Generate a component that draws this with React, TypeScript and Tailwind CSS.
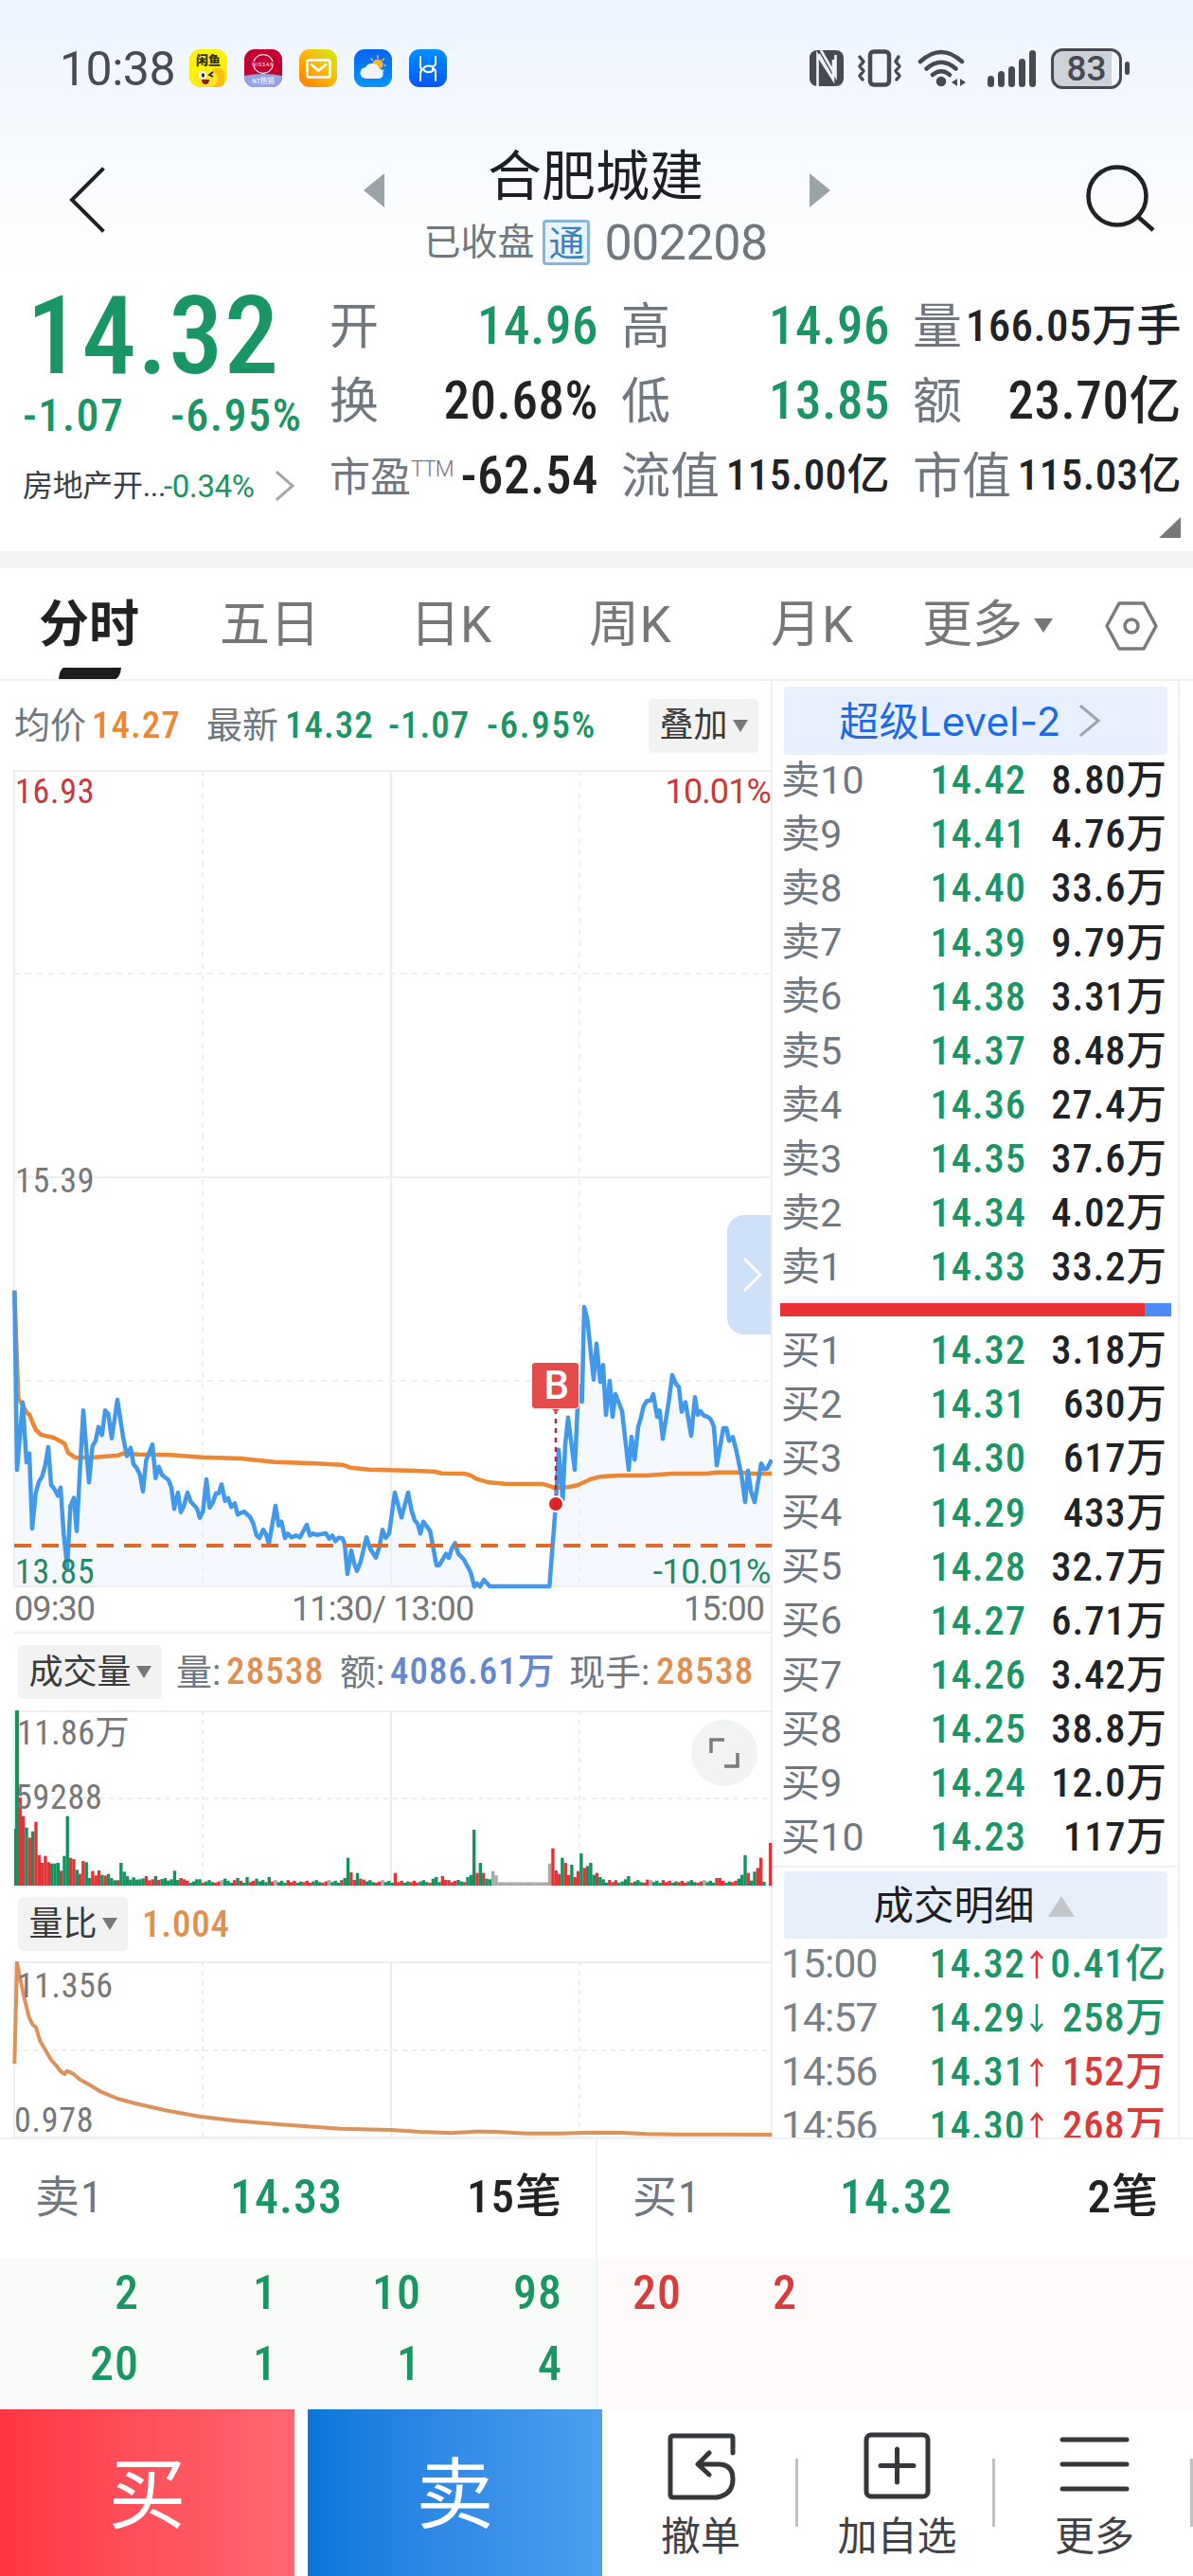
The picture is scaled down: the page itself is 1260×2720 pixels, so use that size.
import type { ReactNode } from "react";

const GREEN = "#1a9566";
const RED = "#e03438";

type Pt = [number, number];

const toPath = (pts: Pt[]) => "M" + pts.map((p) => `${p[0].toFixed(1)} ${p[1].toFixed(1)}`).join("L");

/* ---------- intraday price data (thirds of a pixel, per session) ---------- */

const morning: Pt[] = [
  [46, 188], [54, 756], [72, 542], [84, 732], [93, 704], [102, 942], [113, 830], [123, 794], [133, 778], [143, 742], [153, 684],
  [162, 804], [172, 816], [183, 838], [192, 812], [202, 960], [213, 1066], [223, 872], [234, 845], [243, 950], [254, 740],
  [264, 568], [282, 796], [293, 680], [303, 664], [312, 620], [323, 646], [333, 568], [343, 578], [354, 656], [372, 534],
  [390, 652], [402, 712], [414, 686], [423, 738], [433, 750], [443, 770], [453, 824], [463, 726], [483, 676], [493, 782],
  [503, 746], [513, 772], [534, 788], [543, 812], [552, 880], [564, 828], [573, 890], [582, 872], [594, 828], [604, 856],
  [624, 878], [633, 908], [643, 888], [654, 786], [664, 876], [674, 860], [684, 830], [693, 830], [702, 802], [713, 854],
  [723, 846], [733, 874], [744, 862], [753, 898], [773, 888], [793, 906], [803, 928], [813, 964], [822, 972], [834, 946],
  [843, 960], [852, 990], [873, 870], [883, 932], [892, 920], [903, 972], [912, 958], [923, 970], [938, 964], [950, 970],
  [972, 930], [982, 964], [992, 958], [1003, 962], [1033, 957], [1043, 974], [1053, 964], [1063, 982], [1073, 971], [1085, 973],
  [1092, 990], [1101, 1086], [1113, 1012], [1122, 1052], [1131, 1076], [1143, 1046], [1161, 970], [1173, 1006], [1191, 1034], [1202, 1000],
  [1212, 946], [1222, 971], [1233, 958], [1251, 828], [1272, 907], [1293, 828], [1304, 886], [1314, 916], [1323, 926], [1332, 958], [1341, 920],
];

const afternoon: Pt[] = [
  [141, 1070], [163, 1100], [183, 1208], [192, 1208], [213, 1172], [222, 1185], [231, 1156], [242, 1138], [252, 1172], [270, 1190],
  [291, 1230], [303, 1276], [312, 1266], [321, 1276], [333, 1254], [352, 1275], [541, 1275], [561, 1014], [570, 842], [583, 1002],
  [591, 826], [600, 740], [621, 906], [633, 640], [644, 690], [651, 390], [661, 428], [681, 620], [690, 506], [702, 628], [711, 574],
  [720, 732], [732, 624], [741, 738], [750, 666], [771, 720], [792, 906], [801, 802], [811, 874], [822, 770], [831, 740], [839, 704],
  [850, 688], [862, 686], [870, 666], [882, 738], [890, 718], [900, 808], [919, 690], [930, 606], [942, 634], [951, 644], [960, 722],
  [972, 692], [990, 798], [1002, 676], [1011, 732], [1020, 720], [1030, 734], [1042, 738], [1052, 746], [1062, 770], [1071, 892],
  [1092, 774], [1102, 774], [1110, 814], [1122, 802], [1132, 840], [1150, 926], [1161, 1008], [1170, 908], [1180, 976], [1191, 1008],
  [1212, 886], [1221, 904], [1230, 902], [1245, 874],
];

const avgMorning: Pt[] = [
  [46, 188], [58, 530], [70, 548], [84, 574], [94, 582], [104, 608], [114, 630], [130, 645], [170, 654], [204, 672], [216, 702],
  [240, 718], [300, 716], [375, 710], [390, 704], [440, 707], [540, 709], [640, 716], [760, 720], [870, 731], [1000, 736],
  [1085, 740], [1110, 749], [1170, 755], [1240, 757],
];
const avgAfternoon: Pt[] = [
  [0, 906], [120, 909], [180, 912], [200, 917], [270, 918], [290, 923], [310, 935], [350, 946], [400, 950], [520, 951], [545, 958],
  [556, 964], [600, 961], [630, 955], [670, 936], [700, 928], [760, 924], [850, 924], [930, 918], [1040, 918], [1070, 914], [1150, 914], [1180, 918], [1245, 918],
];

const am = (p: Pt): Pt => [p[0] / 3, 1300 + p[1] / 3];
const pm = (p: Pt): Pt => [400 + p[0] / 3, 1250 + p[1] / 3];

const priceLine = toPath([...morning.map(am), ...afternoon.map(pm)]);
const avgLine = toPath([...avgMorning.map(am), ...avgAfternoon.map(pm)]);

/* ---------- volume bars: minute index -> [height, colour] ---------- */

const G = "#17925f";
const R = "#e03438";
const Y = "#a8a8a8";

const spikes: [number, number, string][] = [
  [34, 256, G], [40, 533, R], [46, 592, R], [53, 628, G], [59, 660, R], [65, 640, G], [71, 610, R], [78, 715, R], [84, 740, R],
  [90, 718, R], [96, 738, R], [102, 742, G], [109, 742, G], [115, 740, G], [122, 765, R], [128, 718, G], [134, 592, G],
  [140, 724, R], [147, 728, R], [153, 762, G], [159, 775, R], [166, 734, R], [172, 738, G], [178, 788, G], [185, 766, R],
  [191, 780, R], [197, 764, R], [203, 778, G], [210, 780, R], [216, 775, G], [222, 788, G], [228, 795, G], [235, 795, R],
  [241, 740, G], [248, 768, G], [254, 782, G], [260, 793, G], [266, 786, G], [272, 793, G], [278, 792, G], [285, 789, G],
  [291, 782, R], [298, 795, R], [304, 792, R], [310, 782, G], [316, 794, R], [323, 791, G], [329, 788, G], [335, 796, G],
  [341, 792, G], [347, 765, G], [354, 794, G], [360, 788, R], [366, 792, R], [392, 792, G], [398, 792, G], [449, 790, G],
  [474, 788, G], [493, 785, G], [511, 790, G], [536, 785, G], [687, 788, G], [693, 724, G], [700, 770, R], [706, 794, R],
  [712, 772, G], [718, 790, R], [725, 793, R], [788, 772, R], [863, 790, G], [870, 785, G], [882, 782, R], [888, 794, R],
  [914, 794, G], [932, 785, G], [939, 778, G], [946, 635, G], [952, 772, R], [958, 740, G], [965, 772, R], [971, 790, G],
  [977, 792, G], [984, 766, Y], [990, 780, Y], [1096, 742, Y], [1102, 694, R], [1109, 764, R], [1115, 775, R], [1121, 724, G],
  [1128, 740, R], [1134, 778, R], [1140, 746, G], [1146, 785, R], [1152, 766, R], [1159, 710, G], [1165, 756, R], [1171, 750, G],
  [1178, 740, G], [1184, 778, G], [1190, 772, R], [1196, 785, G], [1203, 792, G], [1215, 794, R], [1228, 795, R], [1247, 792, G],
  [1254, 782, G], [1291, 793, R], [1430, 788, R], [1437, 788, R], [1474, 790, G], [1480, 778, G], [1486, 716, G], [1492, 772, R],
  [1499, 796, G], [1505, 768, G], [1511, 756, R], [1518, 724, R], [1524, 800, G], [1530, 812, G], [1537, 677, R],
];

const bars = (() => {
  const table = new Map<number, [number, string]>();
  for (const [x, top, c] of spikes) table.set(Math.round((x - 34) / 6.29), [(812 - top) / 3, c]);
  return Array.from({ length: 240 }, (_, i) => {
    const known = table.get(i);
    const x = 18 + i * 3.329;
    if (known) return { x, h: known[0], c: known[1] };
    if (i > 152 && i < 169) return { x, h: 3.5, c: Y };
    const n = (i * 7919) % 17;
    return { x, h: 3 + (n % 5) * 0.7, c: n < 8 ? G : n === 9 ? Y : R };
  });
})();

const ratioLine = toPath(
  (
    [
      [29, 567], [34, 248], [42, 310], [50, 370], [58, 420], [65, 443], [72, 452], [80, 495], [90, 522], [102, 555], [112, 573],
      [122, 593], [129, 600], [134, 590], [145, 598], [160, 618], [180, 635], [200, 655], [235, 678], [270, 693], [330, 715],
      [400, 735], [470, 748], [560, 760], [680, 773], [780, 777], [840, 783], [900, 787], [950, 782], [990, 783], [1050, 788],
      [1120, 788], [1180, 785], [1240, 786], [1290, 790], [1350, 791], [1540, 792],
    ] as Pt[]
  ).map((p): Pt => [p[0] * 0.5293, 1990 + p[1] / 3]),
);

/* ---------- order book ---------- */

const asks: [string, string, string][] = [
  ["卖10", "14.42", "8.80万"], ["卖9", "14.41", "4.76万"], ["卖8", "14.40", "33.6万"], ["卖7", "14.39", "9.79万"],
  ["卖6", "14.38", "3.31万"], ["卖5", "14.37", "8.48万"], ["卖4", "14.36", "27.4万"], ["卖3", "14.35", "37.6万"],
  ["卖2", "14.34", "4.02万"], ["卖1", "14.33", "33.2万"],
];
const bids: [string, string, string][] = [
  ["买1", "14.32", "3.18万"], ["买2", "14.31", "630万"], ["买3", "14.30", "617万"], ["买4", "14.29", "433万"],
  ["买5", "14.28", "32.7万"], ["买6", "14.27", "6.71万"], ["买7", "14.26", "3.42万"], ["买8", "14.25", "38.8万"],
  ["买9", "14.24", "12.0万"], ["买10", "14.23", "117万"],
];
const trades: [string, string, boolean, string, boolean][] = [
  ["15:00", "14.32", true, "0.41亿", false],
  ["14:57", "14.29", false, "258万", false],
  ["14:56", "14.31", true, "152万", true],
  ["14:56", "14.30", true, "268万", true],
];

/* ---------- pieces ---------- */

function Chevron({ w, h, color, sw, left }: { w: number; h: number; color: string; sw: number; left?: boolean }) {
  const d = left ? `M${w - sw} ${sw}L${sw} ${h / 2}L${w - sw} ${h - sw}` : `M${sw} ${sw}L${w - sw} ${h / 2}L${sw} ${h - sw}`;
  return (
    <svg width={w} height={h} fill="none" stroke={color} strokeWidth={sw} strokeLinecap="square" className="shrink-0">
      <path d={d} />
    </svg>
  );
}

function Caret() {
  return (
    <svg width="16" height="13" className="shrink-0">
      <path d="M0 0H16L8 13Z" fill="#777" />
    </svg>
  );
}

function StatusBar() {
  return (
    <div className="flex h-[144px] items-center pr-[67px] pl-[63px] text-[#484b50]">
      <span className="w-[137px] pt-[2px] text-[50px] tracking-[-0.01em] [font-stretch:100%]">10:38</span>
      <div className="flex gap-[18px]">
        <div className="relative flex h-10 w-10 justify-center overflow-hidden rounded-[11px] bg-[#fbf20a]">
          <span className="pt-[5px] text-[13px] leading-[13px] font-black text-[#33300a]">闲鱼</span>
          <svg viewBox="0 0 40 22" className="absolute bottom-0 left-0 w-10">
            <path d="M24 4Q32 -2 37 6L37 22H10Z" fill="#fbbf10" />
            <ellipse cx="18" cy="13" rx="12" ry="10" fill="#fde32a" />
            <circle cx="14" cy="9" r="4" fill="#fff" />
            <ellipse cx="14.500" cy="9.500" rx="1.600" ry="2.300" fill="#222" />
            <path d="M25 6l-4 3l4 2" stroke="#222" strokeWidth="1.800" fill="none" />
            <path d="M13 14h8q0 5-4 5t-4-5" fill="#8a1f13" />
          </svg>
        </div>
        <svg viewBox="0 0 40 40" className="h-10 w-10 rounded-[11px]">
          <rect width="40" height="40" fill="#c3002f" />
          <path d="M0 28Q20 24 40 28V40H0Z" fill="#93a5e6" />
          <path d="M10 13a10.500 10.500 0 0 1 20 0M10 18a10.500 10.500 0 0 0 20 0" fill="none" stroke="#fff" strokeWidth="1.200" />
          <text x="20" y="17.800" fontSize="6" letterSpacing="0.800" textAnchor="middle" fill="#fff">NISSAN</text>
          <text x="20" y="36" fontSize="7.500" textAnchor="middle" fill="#fff">N7热销</text>
        </svg>
        <div className="flex h-10 w-10 items-center justify-center rounded-[11px] bg-linear-to-tr from-[#ff7a00] via-[#fbb30a] to-[#c5f01a]">
          <svg width="27" height="21" fill="none" stroke="#fff" strokeWidth="2.600" strokeLinejoin="round">
            <rect x="1.500" y="1.500" width="24" height="18" rx="2" />
            <path d="M5 5.500L13.500 12.500L22 5.500" />
          </svg>
        </div>
        <svg viewBox="0 0 40 40" className="h-10 w-10 rounded-[11px] bg-linear-to-b from-[#0a63f0] to-[#0a94ff]">
          <g stroke="#ffc63a" strokeWidth="1.500" strokeLinecap="round">
            <path d="M25 7v2M31.500 10l-1.300 1.500M18 10l1.300 1.500M33 17h-1M31 23l-1-1" />
          </g>
          <circle cx="25" cy="16" r="5.500" fill="#f9b428" />
          <path d="M13 31a6 6 0 0 1-1-12a8 8 0 0 1 14.500 1.500a5.400 5.400 0 0 1 0 10.500Z" fill="#eef5ff" />
        </svg>
        <svg viewBox="0 0 40 40" className="h-10 w-10 rounded-[11px] bg-linear-to-b from-[#088fff] to-[#0a55f5]" fill="none" stroke="#fff" strokeWidth="2" strokeLinecap="round">
          <path d="M12 8V18Q12 21 15 21M28 8V15Q28 18 24 18Q17 16 15 21Q18 26 25 23V19M28 33V24Q28 21 25 20M12 33V26Q12 22 15 21" />
        </svg>
      </div>
      <div className="ml-auto flex items-center text-[#474a50]">
        <svg width="36" height="38" className="mr-[14px]">
          <rect width="36" height="38" rx="8" fill="currentColor" />
          <path d="M8.500 38V5L25 31V10M12 0L27.500 27V5" fill="none" stroke="#eef4fd" strokeWidth="2.600" />
          <path d="M10 4l15 26" stroke="#eef4fd" strokeWidth="2" />
        </svg>
        <svg width="50" height="40" className="mr-[14px]" fill="none" stroke="currentColor" strokeLinecap="round" strokeLinejoin="round">
          <rect x="14" y="2.500" width="20" height="35" rx="4" strokeWidth="4.500" />
          <path d="M3 8l4 5l-4 5l4 5l-4 5l3 4M44 8l-3 5l4 5l-4 5l4 5l-3 4" strokeWidth="3.500" />
        </svg>
        <svg width="52" height="40" className="mr-[22px]" fill="none" stroke="currentColor" strokeWidth="4.500" strokeLinecap="round">
          <path d="M3 13Q25 -7 47 13M9.500 20.500Q25 7 40.500 20.500M16 27Q25 19.500 34 27" />
          <circle cx="25" cy="34" r="3" fill="currentColor" />
          <path d="M42 31v8l-6-4zM45 31v8l6-4z" fill="currentColor" stroke="none" />
        </svg>
        <div className="mr-[16px] flex h-10 items-end gap-[4px]">
          <i className="h-[12px] w-[7px] rounded-full bg-current" />
          <i className="h-[17px] w-[7px] rounded-full bg-current" />
          <i className="h-[22px] w-[7px] rounded-full bg-current" />
          <i className="h-[30px] w-[7px] rounded-full bg-current" />
          <i className="h-[39px] w-[7px] rounded-full bg-current" />
        </div>
        <div className="mr-[3px] flex h-[43px] w-[75px] items-center justify-center rounded-[12px] border-[3px] border-current bg-linear-to-r from-[#cdd1d8] from-88% to-transparent to-88% text-[37px] font-medium">
          <span className="[font-stretch:100%]">83</span>
        </div>
        <i className="h-[14px] w-[5px] rounded-full bg-current" />
      </div>
    </div>
  );
}

function Header() {
  return (
    <div className="flex h-[146px] pl-[72px]">
      <div className="mt-[31px] w-[312px]">
        <Chevron w={40} h={72} color="#202020" sw={4} left />
      </div>
      <svg width="22" height="36" className="mt-[39px]">
        <path d="M22 0V36L0 18Z" fill="#9aa3a8" />
      </svg>
      <div className="flex w-[449px] flex-col items-center">
        <div className="mt-[12px] pr-[3px] text-[57px] leading-[62px] text-[#1d1f22]">合肥城建</div>
        <div className="mt-[11px] flex items-center pr-[3px] whitespace-nowrap text-[#70777d]">
          <span className="text-[39px]">已收盘</span>
          <span className="mr-[15px] ml-[9px] flex h-[48px] w-[50px] items-center justify-center rounded-[4px] border-[3px] border-[#86b4dc] bg-[#eaf4ff] pt-[2px] text-[38px] text-[#3b81bd]">
            通
          </span>
          <span className="pt-[2px] text-[52px] tracking-[-0.01em] [font-stretch:100%]">002208</span>
        </div>
      </div>
      <svg width="22" height="36" className="mt-[39px]">
        <path d="M0 0V36L22 18Z" fill="#9aa3a8" />
      </svg>
      <svg width="76" height="74" className="mt-[29px] ml-[269px]" fill="none" stroke="#202225" strokeWidth="4.500">
        <circle cx="34" cy="34" r="30.500" />
        <path d="M56 56L72 70" />
      </svg>
    </div>
  );
}

function Stat({ label, children, color = "text-[#202224]", size = "text-[55px]" }: { label: ReactNode; children: string; color?: string; size?: string }) {
  return (
    <div className="flex h-[79px] items-center justify-between whitespace-nowrap">
      <span className="pt-[4px] text-[52px] text-[#70777f]">{label}</span>
      <span className={`font-medium tracking-[0.01em] ${size} ${color}`}>{children}</span>
    </div>
  );
}

function Quote() {
  return (
    <div className="relative flex h-[292px]">
      <div className="flex w-[348px] flex-col whitespace-nowrap text-[#1a9566]">
        <div className="mt-[7px] pl-[28px] text-[115px] leading-[115px] font-medium tracking-[0.009em]">14.32</div>
        <div className="flex h-[54px] pl-[24px] text-[48px] leading-[54px] font-medium tracking-[0.03em]">
          <span className="w-[156px]">-1.07</span>
          <span>-6.95%</span>
        </div>
        <div className="mt-[25px] flex h-[44px] items-center pl-[24px] text-[32px] text-[#3b3f45]">
          <span className="w-[149px] tracking-[-0.01em]">房地产开...</span>
          <span className="mr-[17px] w-[100px] text-[33px] tracking-[-0.01em] text-[#1a9566] [font-stretch:100%]">-0.34%</span>
          <Chevron w={22} h={34} color="#a5a8ab" sw={3} />
        </div>
      </div>
      <div className="mt-[14px] grid grid-cols-[284px_284px_284px] gap-x-[24px] [&_span]:leading-[60px]">
        <div>
          <Stat label="开" color="text-[#1a9566]">14.96</Stat>
          <Stat label="换">20.68%</Stat>
          <Stat
            label={
              <b className="flex items-start text-[43px] font-normal">
                市盈
                <small className="mt-[10px] text-[23px] leading-none font-light [font-stretch:100%] tracking-[-0.04em]">TTM</small>
              </b>
            }
          >
            -62.54
          </Stat>
        </div>
        <div>
          <Stat label="高" color="text-[#1a9566]">14.96</Stat>
          <Stat label="低" color="text-[#1a9566]">13.85</Stat>
          <Stat label="流值" size="text-[45px]">115.00亿</Stat>
        </div>
        <div>
          <Stat label="量" size="text-[47px]">166.05万手</Stat>
          <Stat label="额">23.70亿</Stat>
          <Stat label="市值" size="text-[45px]">115.03亿</Stat>
        </div>
      </div>
      <svg width="23" height="22" className="absolute right-[13px] bottom-[14px]">
        <path d="M23 0V22H0Z" fill="#777" />
      </svg>
    </div>
  );
}

function Tabs() {
  return (
    <div className="relative flex h-[119px] items-center border-b-2 border-[#eef0f0] pt-[4px] text-[53px] text-[#777] [&>span]:shrink-0">
      <strong className="w-[190px] pl-[41px] font-bold text-[#202224]">分时</strong>
      <span className="w-[203px] pl-[42px]">五日</span>
      <span className="w-[190px] pl-[40px] [font-stretch:100%]">日K</span>
      <span className="w-[191px] pl-[39px] tracking-[0.01em] [font-stretch:100%]">周K</span>
      <span className="w-[200px] pl-[40px] tracking-[0.02em] [font-stretch:100%]">月K</span>
      <span className="w-[118px]">更多</span>
      <svg width="20" height="15">
        <path d="M0 0H20L10 15Z" fill="#777" />
      </svg>
      <svg width="58" height="56" className="ml-[54px]" fill="none" stroke="#7b7b7b" strokeWidth="3.500" strokeLinejoin="round">
        <path d="M16 4H42L55 28L42 52H16L3 28Z" />
        <circle cx="29" cy="28" r="7" />
      </svg>
      <svg width="66" height="12" className="absolute bottom-0 left-[62px]">
        <path d="M5 0H66Q65 10 60 12H0Q1 2 5 0Z" fill="#1c1c1c" />
      </svg>
    </div>
  );
}

const Pill = ({ children, w }: { children: string; w: string }) => (
  <span className={`flex h-[57px] items-center justify-center gap-[5px] rounded-[5px] bg-[#f2f2f2] text-[36px] font-normal tracking-normal text-[#3a3a3a] ${w}`}>
    {children}
    <Caret />
  </span>
);

function MainChart() {
  return (
    <div className="relative h-[912px] text-[36px] tracking-[0.02em]">
      <svg viewBox="0 813 816 912" className="h-[912px] w-[816px]" fill="none">
        <path d={`${priceLine}V1675H15Z`} fill="#f5f9ff" />
        <g stroke="#eef0f0" strokeWidth="2.500">
          <path d="M15 814H816M15 813V1675M15 1243H816M413 813V1675M15 1675H816M15 1724H816" />
          <path d="M214 813V1675M612 813V1675M15 1028H816M15 1458H816" strokeWidth="2" strokeDasharray="6 6" />
        </g>
        <path d={avgLine} stroke="#ee8733" strokeWidth="4.500" strokeLinejoin="round" />
        <path d={priceLine} stroke="#4299ea" strokeWidth="4.500" strokeLinejoin="round" />
        <path d="M15 1632H815" stroke="#e06a28" strokeWidth="4" strokeDasharray="18 11" />
        <path d="M587 1488V1582" stroke="#a82837" strokeWidth="2.500" strokeDasharray="5 5" />
        <circle cx="587" cy="1588" r="8" fill="#dc2226" stroke="#fff" strokeWidth="2" />
        <path d="M582 1487L587 1492L592 1487Z" fill="#e44c4c" />
      </svg>
      <div className="absolute top-[625px] left-[561px] flex h-[50px] w-[51px] items-center justify-center rounded-[4px] border border-white bg-[#e44c4c] pl-[3px] text-[42px] font-medium text-white [font-stretch:100%]">
        B
      </div>
      <div className="absolute top-[470px] right-0 flex h-[126px] w-[46px] items-center justify-end rounded-l-[18px] bg-[#cfe0f9] pr-[8px]">
        <Chevron w={22} h={38} color="#fff" sw={3} />
      </div>
      <span className="absolute top-[5px] left-[16px] text-[#c8383c]">16.93</span>
      <span className="absolute top-[5px] right-0 tracking-[-0.025em] text-[#c8383c] [font-stretch:100%]">10.01%</span>
      <span className="absolute top-[416px] left-[16px] text-[#777]">15.39</span>
      <span className="absolute top-[829px] left-[16px] text-[#1f8a63]">13.85</span>
      <span className="absolute top-[829px] right-0 tracking-[-0.01em] text-[#1f8a63] [font-stretch:100%]">-10.01%</span>
      <div className="absolute top-[868px] left-[15px] flex tracking-[-0.025em] text-[#777] [&>span]:[font-stretch:100%]">
        <span className="w-[293px]">09:30</span>
        <span className="w-[414px]">11:30/ 13:00</span>
        <span>15:00</span>
      </div>
    </div>
  );
}

function LeftPane() {
  return (
    <div className="flex w-[816px] shrink-0 flex-col border-r-2 border-[#edf0f0] whitespace-nowrap">
      <div className="flex h-[94px] items-center pl-[15px] text-[39px] font-medium tracking-[0.025em] text-[#1a9566]">
        <span className="w-[82px] text-[38px] font-normal tracking-normal text-[#70777f]">均价</span>
        <span className="w-[121px] text-[#ee8733]">14.27</span>
        <span className="w-[83px] text-[38px] font-normal tracking-normal text-[#70777f]">最新</span>
        <span className="w-[109px]">14.32</span>
        <span className="w-[104px]">-1.07</span>
        <span className="w-[171px] tracking-[0.042em]">-6.95%</span>
        <Pill w="w-[116px]">叠加</Pill>
      </div>
      <MainChart />
      <div className="flex h-[81px] items-center pl-[19px] text-[39px] font-medium tracking-[0.03em] text-[#df8f50]">
        <Pill w="w-[152px]">成交量</Pill>
        <span className="ml-[15px] w-[53px] text-[38px] font-normal tracking-normal text-[#70777f]">量:</span>
        <span className="w-[120px]">28538</span>
        <span className="w-[53px] text-[38px] font-normal tracking-normal text-[#70777f]">额:</span>
        <span className="w-[189px] tracking-[0.025em] text-[#6488cd]">4086.61万</span>
        <span className="w-[92px] text-[38px] font-normal tracking-normal text-[#70777f]">现手:</span>
        <span>28538</span>
      </div>
      <div className="relative h-[186px] text-[36px] text-[#777]">
        <svg viewBox="0 1806 816 186" className="h-[186px] w-[816px]">
          <g stroke="#eceeee" strokeWidth="2">
            <path d="M15 1807H816M15 1806V1990M413 1806V1990M15 1990H816" />
            <path d="M214 1806V1990M612 1806V1990M15 1899H816" strokeDasharray="5 5" />
          </g>
          {bars.map((b, i) => (
            <rect key={i} x={b.x - (i ? 1.7 : 2)} y={1991 - b.h} width={i ? 3.4 : 4} height={b.h} fill={b.c} />
          ))}
          <rect x="15" y="1931" width="2" height="60" fill={G} />
        </svg>
        <span className="absolute top-[6px] left-[18px] tracking-[0.01em]">11.86万</span>
        <span className="absolute top-[74px] left-[16px] tracking-[0.02em]">59288</span>
        <div className="absolute top-[10px] right-[14px] flex h-[70px] w-[70px] items-center justify-center rounded-full bg-[#f2f3f3]">
          <svg width="32" height="32" fill="none" stroke="#7b7b7b" strokeWidth="3.500">
            <path d="M2 16V2H16M30 16V30H16" />
          </svg>
        </div>
      </div>
      <div className="flex h-[79px] items-center pl-[19px] text-[39px] font-medium tracking-[0.02em] text-[#df8f50]">
        <Pill w="w-[116px]">量比</Pill>
        <span className="ml-[15px] pt-[2px]">1.004</span>
      </div>
      <div className="relative h-[186px] text-[36px] text-[#777]">
        <svg viewBox="0 2071 816 186" className="h-[186px] w-[816px]" fill="none">
          <g stroke="#eceeee" strokeWidth="2">
            <path d="M15 2072H816M15 2071V2257M413 2071V2257M15 2257H816" />
            <path d="M214 2071V2257M612 2071V2257M15 2165H816" strokeDasharray="5 5" />
          </g>
          <path d={ratioLine} stroke="#dc9259" strokeWidth="4" strokeLinejoin="round" />
        </svg>
        <span className="absolute top-[8px] left-[18px] tracking-[0.015em]">11.356</span>
        <span className="absolute top-[150px] left-[15px] tracking-[0.02em]">0.978</span>
      </div>
    </div>
  );
}

function BookRow({ row }: { row: [string, string, string] }) {
  return (
    <div className="flex h-[57.100px] items-center pl-[9px] text-[42.500px] tracking-[0.022em] whitespace-nowrap">
      <span className="w-[130px] text-[41px] tracking-[0.005em] text-[#70777f] [font-stretch:100%]">{row[0]}</span>
      <span className="w-[129px] text-right font-medium text-[#1a9566]">{row[1]}</span>
      <span className="w-[149px] text-right font-medium text-[#202224]">{row[2]}</span>
    </div>
  );
}

function Arrow({ up }: { up: boolean }) {
  return (
    <svg width="14" height="30" fill="none" stroke={up ? RED : GREEN} strokeWidth="2.500" className="mx-[5px] shrink-0">
      <path d={up ? "M7 30V2M1 9L7 2L13 9" : "M7 0V28M1 21L7 28L13 21"} />
    </svg>
  );
}

function OrderBook() {
  return (
    <div className="flex w-[430px] flex-col overflow-hidden border-r-2 border-[#edf0f0]">
      <div className="mt-[6px] ml-[12px] flex h-[72px] w-[405px] shrink-0 items-center justify-center gap-[18px] rounded-[4px] bg-[#e7f0fc] pr-[12px] text-[42px] text-[#1d6ae5]">
        <span className="pt-[2px] font-['Inter','Noto_Sans_CJK_SC',sans-serif] tracking-[0.005em]">超级Level-2</span>
        <Chevron w={24} h={36} color="#9ba4ad" sw={3} />
      </div>
      <div className="mt-[-1px]">{asks.map((r) => <BookRow key={r[0]} row={r} />)}</div>
      <div className="mt-[9px] ml-[8px] flex h-[14px] w-[413px] shrink-0 bg-[#4d8cf5]">
        <div className="w-[385px] bg-[#e93036]" />
      </div>
      <div className="mt-[8px]">{bids.map((r) => <BookRow key={r[0]} row={r} />)}</div>
      <div className="mt-[1px] h-[2px] shrink-0 bg-[#eeefef]" />
      <div className="mt-[4px] ml-[12px] flex h-[71px] w-[405px] shrink-0 items-center justify-center gap-[14px] rounded-[4px] bg-[#e7effb] pt-[4px] pr-[4px] text-[42.500px] text-[#1d1f22]">
        成交明细
        <svg width="28" height="22">
          <path d="M14 0L28 22H0Z" fill="#c3c7ca" />
        </svg>
      </div>
      <div className="mt-[-1px]">
        {trades.map(([t, p, up, v, red], i) => (
          <div key={i} className="flex h-[57px] items-center pl-[9px] text-[42.500px] tracking-[0.022em] whitespace-nowrap">
            <span className="w-[130px] tracking-[-0.02em] text-[#7a8087] [font-stretch:100%]">{t}</span>
            <span className="w-[128px] text-right font-medium text-[#1a9566]">{p}</span>
            <Arrow up={up} />
            <span className={`ml-auto pr-[12px] text-right font-medium ${red ? "text-[#d93a3a]" : "text-[#1a9566]"}`}>{v}</span>
          </div>
        ))}
      </div>
    </div>
  );
}

function Queues() {
  return (
    <div className="flex h-[287px] border-t-2 border-[#f0f1f1] text-[50px] font-medium tracking-[0.02em] whitespace-nowrap">
      <div className="flex w-[631px] flex-col border-r-2 border-[#f0f2f2]">
        <div className="flex h-[125px] items-center pb-[4px] pl-[37px] text-[#1a9566]">
          <span className="w-[206px] text-[47px] font-normal text-[#70777f]">卖1</span>
          <span>14.33</span>
          <span className="ml-auto pr-[35px] text-[49px] text-[#202224]">15笔</span>
        </div>
        <div className="grid flex-1 grid-cols-[147px_146px_152px_149px] content-start bg-[#f9fbf9] text-right leading-[75px] text-[#1a9566]">
          <span>2</span><span>1</span><span>10</span><span>98</span>
          <span>20</span><span>1</span><span>1</span><span>4</span>
        </div>
      </div>
      <div className="flex flex-1 flex-col">
        <div className="flex h-[125px] items-center pb-[4px] pl-[37px] text-[#1a9566]">
          <span className="w-[219px] text-[47px] font-normal text-[#70777f]">买1</span>
          <span>14.32</span>
          <span className="ml-auto pr-[36px] text-[49px] text-[#202224]">2笔</span>
        </div>
        <div className="flex flex-1 bg-[#fffafa] pl-[37px] leading-[75px] text-[#d93a3a]">
          <span className="w-[148px]">20</span>
          <span>2</span>
        </div>
      </div>
    </div>
  );
}

function Tool({ label, children, w }: { label: string; children: ReactNode; w: string }) {
  return (
    <div className={`flex flex-col items-center pt-[24px] pl-[4px] text-[42px] text-[#3f4144] ${w}`}>
      <svg width="76" height="72" fill="none" stroke="#35383b" strokeWidth="5" strokeLinecap="round" strokeLinejoin="round">
        {children}
      </svg>
      <span className="mt-[18px]">{label}</span>
    </div>
  );
}

function BottomBar() {
  return (
    <div className="flex h-[176px] items-center text-white">
      <div className="mr-[14px] flex h-full w-[311px] items-center justify-center bg-linear-to-r from-[#ff3543] to-[#ff6672] pt-[6px] text-[82px]">买</div>
      <div className="flex h-full w-[311px] items-center justify-center bg-linear-to-r from-[#0876db] to-[#4e9fef] pt-[6px] text-[82px]">卖</div>
      <div className="flex h-full flex-1 items-center">
        <Tool label="撤单" w="h-full w-[204px]">
          <path d="M72 22V6Q72 4 70 4H9Q6 4 6 7V66Q6 69 9 69H55Q72 66 72 50Q72 34 57 34H37M47 22L35 34L47 45" />
        </Tool>
        <i className="h-[72px] w-[3px] bg-[#bfc1c3]" />
        <Tool label="加自选" w="h-full w-[205px]">
          <rect x="5" y="3" width="65" height="65" rx="5" />
          <path d="M37.500 18V53M20 35.500H55" />
        </Tool>
        <i className="h-[72px] w-[3px] bg-[#bfc1c3]" />
        <Tool label="更多" w="h-full w-[206px]">
          <path d="M4 8H72M4 34H72M4 60H72" />
        </Tool>
        <i className="h-[72px] w-[3px] bg-[#bfc1c3]" />
      </div>
    </div>
  );
}

export default function App() {
  return (
    <div className="flex h-[2720px] w-[1260px] flex-col overflow-hidden bg-white font-['Roboto','Noto_Sans_CJK_SC',sans-serif] leading-none [font-stretch:75%]">
      <div className="bg-linear-to-b from-[#edf4fe] to-white">
        <StatusBar />
        <Header />
      </div>
      <Quote />
      <div className="h-[18px] bg-[#f4f4f4]" />
      <Tabs />
      <div className="flex h-[1538px] overflow-hidden">
        <LeftPane />
        <OrderBook />
      </div>
      <Queues />
      <BottomBar />
    </div>
  );
}
